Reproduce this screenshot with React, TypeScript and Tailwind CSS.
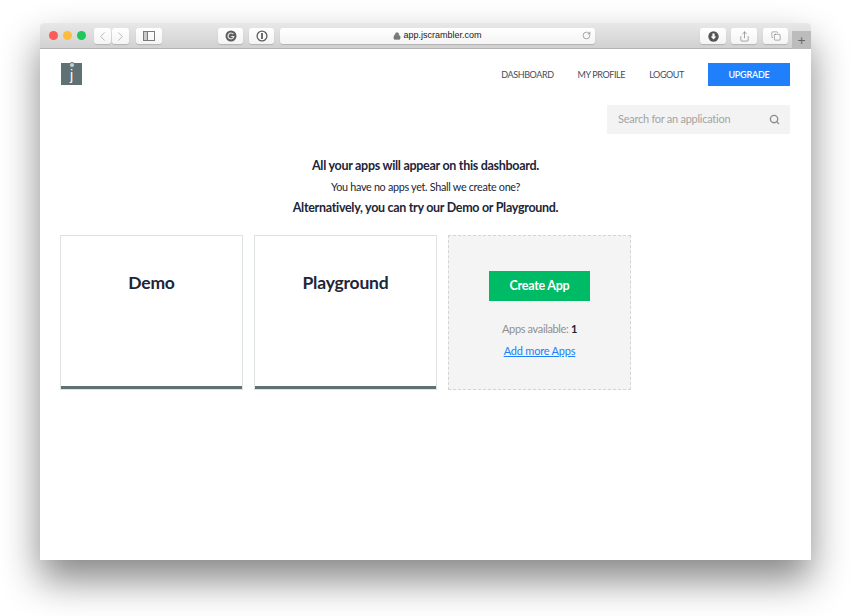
import { ChevronLeft, ChevronRight, Lock, RotateCw, Search, Share, Copy } from "lucide-react";

const ToolButton = ({ className, children }: { className: string; children?: React.ReactNode }) => (
  <div
    className={`h-[16px] shrink-0 flex items-center justify-center rounded-[3px] bg-gradient-to-b from-white to-[#f4f4f4] shadow-[0_1px_1px_rgba(0,0,0,0.16)] ${className}`}
  >
    {children}
  </div>
);

const NavLink = ({ label }: { label: string }) => (
  <a className="text-[9px] leading-[23px] text-[#454d5a] tracking-[-0.4px]">{label}</a>
);

const Card = ({ title }: { title: string }) => (
  <div className="w-[183px] h-[155px] flex flex-col bg-white border border-[#dfe2e2]">
    <div className="flex-1 pt-[35px] text-center text-[17.5px] leading-[24px] tracking-[-0.2px] font-bold text-[#1d2538]">{title}</div>
    <div className="h-[3px] bg-[#5f7174]"></div>
  </div>
);

export default function App() {
  return (
    <div className="w-[850px] h-[616px] overflow-hidden bg-white pt-[23px] pl-[40px] font-['Lato',sans-serif]">
      <div className="w-[771px] h-[537px] flex flex-col rounded-t-[4px] bg-white shadow-[0_20px_38px_rgba(0,0,0,0.48)]">
        {/* Safari toolbar */}
        <div className="h-[26px] flex shrink-0 items-start pt-[5px] pl-[9px] rounded-t-[4px] bg-gradient-to-b from-[#e9e8e9] to-[#d2d1d2] border-b border-[#b3b3b3]">
          <div className="flex items-center gap-[5px] h-[14px]">
            <span className="w-[9px] h-[9px] rounded-full bg-[#fc5b57]"></span>
            <span className="w-[9px] h-[9px] rounded-full bg-[#fdbb40]"></span>
            <span className="w-[9px] h-[9px] rounded-full bg-[#1fc65a]"></span>
          </div>
          <div className="flex gap-px ml-[8px] shrink-0">
            <ToolButton className="w-[17px]">
              <ChevronLeft className="w-[15px] h-[15px] text-[#b4b4b4]" strokeWidth={1.5} />
            </ToolButton>
            <ToolButton className="w-[17px]">
              <ChevronRight className="w-[15px] h-[15px] text-[#b4b4b4]" strokeWidth={1.5} />
            </ToolButton>
          </div>
          <ToolButton className="w-[26px] ml-[7px]">
            <svg width="12" height="10" viewBox="0 0 12 10" fill="none" stroke="#7a7a7a">
              <rect x="0.5" y="0.5" width="11" height="9" />
              <rect x="1" y="1" width="3" height="8" fill="#c9c9c9" stroke="none" />
              <line x1="4.5" y1="0.5" x2="4.5" y2="9.5" />
            </svg>
          </ToolButton>
          <ToolButton className="w-[25px] ml-[56px]">
            <svg width="12" height="12" viewBox="0 0 12 12">
              <circle cx="6" cy="6" r="5.5" fill="#5e5e5e" />
              <path d="M8.3 4.2A2.9 2.9 0 1 0 8.8 6.5H6.2" fill="none" stroke="#e8e8e8" strokeWidth="1.2" />
            </svg>
          </ToolButton>
          <ToolButton className="w-[25px] ml-[6px]">
            <svg width="12" height="12" viewBox="0 0 12 12">
              <circle cx="6" cy="6" r="4.9" fill="none" stroke="#5e5e5e" strokeWidth="1.3" />
              <rect x="5.1" y="3" width="1.8" height="6" fill="#5e5e5e" />
            </svg>
          </ToolButton>
          <ToolButton className="w-[315px] ml-[6px] relative">
            <Lock className="w-[8px] h-[8px] mr-[2px] text-[#777]" fill="#777" strokeWidth={2} />
            <span className="font-['Liberation_Sans',sans-serif] text-[9px] text-[#222]">app.jscrambler.com</span>
            <RotateCw className="absolute right-[4px] top-[3px] w-[9px] h-[9px] text-[#666]" strokeWidth={1.5} />
          </ToolButton>
          <ToolButton className="w-[26px] ml-[105px]">
            <svg width="11" height="11" viewBox="0 0 11 11">
              <circle cx="5.5" cy="5.5" r="5.2" fill="#555" />
              <path d="M4.4 2.5h2.2v3h1.7L5.5 8.4 2.7 5.5h1.7z" fill="#fff" />
            </svg>
          </ToolButton>
          <ToolButton className="w-[26px] ml-[5px]">
            <Share className="w-[11px] h-[11px] text-[#666]" strokeWidth={1.25} />
          </ToolButton>
          <ToolButton className="w-[25px] ml-[6px]">
            <Copy className="w-[10px] h-[10px] text-[#666]" strokeWidth={1.25} />
          </ToolButton>
          <div className="w-[19px] h-[18px] shrink-0 ml-[4px] mt-[3px] flex items-center justify-center bg-[#bcbcbc] text-[14px] leading-none text-[#666]">
            +
          </div>
        </div>

        {/* Page */}
        <div className="flex-1 px-[21px] pt-[14px]">
          <div className="flex items-start justify-between">
            <div className="relative w-[21px] h-[22px] flex justify-center bg-[#5f7174] text-white font-['Liberation_Sans',sans-serif] text-[14px] leading-[25px]">
              j
              <span className="absolute top-[-1px] left-[7.5px] w-[6px] h-[6px] rounded-full border border-[#5f7174] bg-[#c9d0d1]"></span>
            </div>
            <div className="flex items-center gap-[24px]">
              <NavLink label="DASHBOARD" />
              <NavLink label="MY PROFILE" />
              <NavLink label="LOGOUT" />
              <div className="w-[82px] h-[23px] flex items-center justify-center bg-[#2080fb] text-[9px] tracking-[-0.2px] font-semibold text-white">
                UPGRADE
              </div>
            </div>
          </div>

          <div className="flex justify-end mt-[19px]">
            <div className="w-[183px] h-[29px] flex items-center justify-between pl-[11px] pr-[10px] bg-[#f3f3f3]">
              <span className="text-[11px] tracking-[-0.26px] text-[#a3a3a3]">Search for an application</span>
              <Search className="w-[11px] h-[11px] text-[#8b8b8b]" strokeWidth={3} />
            </div>
          </div>

          <div className="mt-[22px] flex flex-col items-center text-[#1d2538]">
            <p className="text-[12.5px] tracking-[-0.29px] leading-[20px] font-bold">All your apps will appear on this dashboard.</p>
            <p className="text-[10.8px] tracking-[-0.3px] leading-[21px]">You have no apps yet. Shall we create one?</p>
            <p className="text-[12.5px] tracking-[-0.3px] leading-[20px] mt-px font-bold">Alternatively, you can try our Demo or Playground.</p>
          </div>

          <div className="flex gap-[11px] mt-[17px] -ml-px">
            <Card title="Demo" />
            <Card title="Playground" />
            <div className="w-[183px] h-[155px] flex flex-col items-center bg-[#f4f4f4] border border-dashed border-[#d4d4d4]">
              <div className="w-[101px] h-[30px] mt-[35px] flex items-center justify-center bg-[#00bb66] text-[12.5px] tracking-[-0.25px] font-bold text-white">
                Create App
              </div>
              <p className="mt-[20px] text-[11px] tracking-[-0.35px] leading-[16px] text-[#8f8f8f]">
                Apps available: <span className="font-bold text-[#1d2538]">1</span>
              </p>
              <a className="mt-[6px] text-[11px] tracking-[-0.2px] leading-[16px] text-[#2080fb] underline">Add more Apps</a>
            </div>
          </div>
        </div>
      </div>
    </div>
  );
}
